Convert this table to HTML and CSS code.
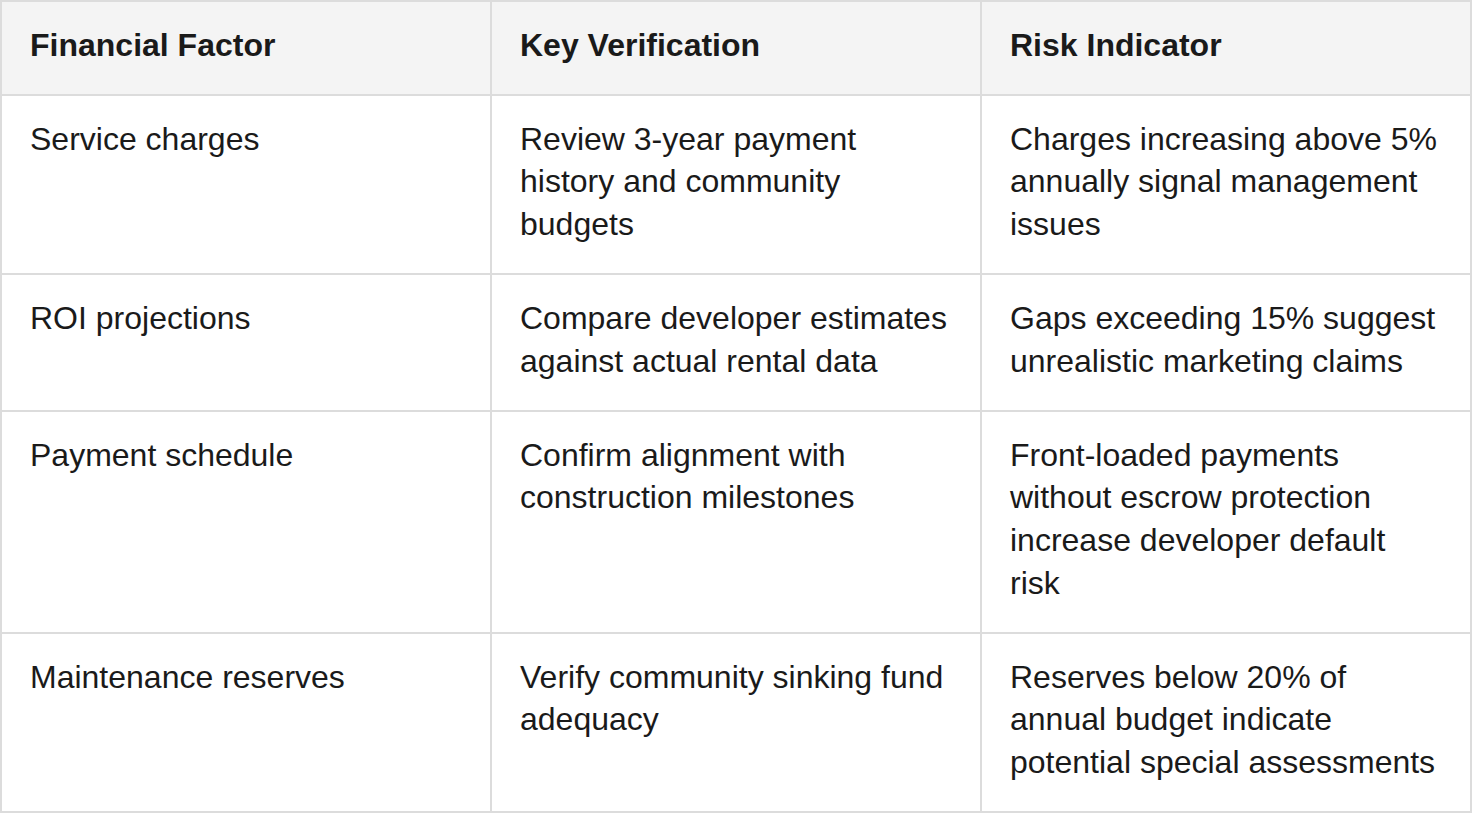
FILE: index.html
```html
<!DOCTYPE html>
<html>
<head>
<meta charset="utf-8">
<link rel="stylesheet" href="styles.css">
</head>
<body>
<table class="factors">
  <thead>
    <tr>
      <th>Financial Factor</th>
      <th>Key Verification</th>
      <th>Risk Indicator</th>
    </tr>
  </thead>
  <tbody>
    <tr>
      <td>Service charges</td>
      <td>Review 3-year payment history and community budgets</td>
      <td>Charges increasing above 5% annually signal management issues</td>
    </tr>
    <tr>
      <td>ROI projections</td>
      <td>Compare developer estimates against actual rental data</td>
      <td>Gaps exceeding 15% suggest unrealistic marketing claims</td>
    </tr>
    <tr>
      <td>Payment schedule</td>
      <td>Confirm alignment with construction milestones</td>
      <td>Front-loaded payments without escrow protection increase developer default risk</td>
    </tr>
    <tr>
      <td>Maintenance reserves</td>
      <td>Verify community sinking fund adequacy</td>
      <td>Reserves below 20% of annual budget indicate potential special assessments</td>
    </tr>
  </tbody>
</table>
</body>
</html>
```

FILE: styles.css
```css
html, body {
  margin: 0;
  padding: 0;
  background: #ffffff;
}

.factors {
  width: 1472px;
  border-collapse: collapse;
  table-layout: fixed;
  font-family: "Liberation Sans", Arial, sans-serif;
  font-size: 32px;
  line-height: 42.67px;
  color: #1a1a1a;
}

.factors th,
.factors td {
  border: 2px solid #dcdcdc;
  padding: 21.67px 28px 27.67px;
  text-align: left;
  vertical-align: top;
}

.factors th {
  background: #f4f4f4;
  font-weight: bold;
}
```
